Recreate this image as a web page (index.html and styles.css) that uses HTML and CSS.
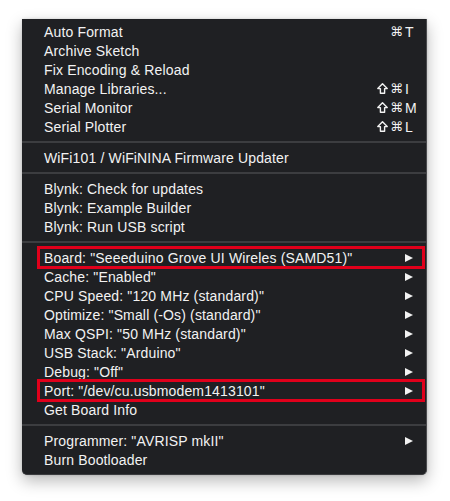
FILE: index.html
```html
<!DOCTYPE html>
<html>
<head>
<meta charset="utf-8">
<link rel="stylesheet" href="styles.css">
</head>
<body>
<div class="menu">
  <div class="item"><span class="label">Auto Format</span><span class="key"><span class="mods">⌘</span><span class="k">T</span></span></div>
  <div class="item"><span class="label">Archive Sketch</span></div>
  <div class="item"><span class="label">Fix Encoding &amp; Reload</span></div>
  <div class="item"><span class="label">Manage Libraries...</span><span class="key"><svg class="shift" viewBox="0 0 11 11"><path d="M5.5 0.8 L10.2 5.6 H7.6 V10.2 H3.4 V5.6 H0.8 Z"/></svg><span class="mods">⌘</span><span class="k">I</span></span></div>
  <div class="item"><span class="label">Serial Monitor</span><span class="key"><svg class="shift" viewBox="0 0 11 11"><path d="M5.5 0.8 L10.2 5.6 H7.6 V10.2 H3.4 V5.6 H0.8 Z"/></svg><span class="mods">⌘</span><span class="k">M</span></span></div>
  <div class="item"><span class="label">Serial Plotter</span><span class="key"><svg class="shift" viewBox="0 0 11 11"><path d="M5.5 0.8 L10.2 5.6 H7.6 V10.2 H3.4 V5.6 H0.8 Z"/></svg><span class="mods">⌘</span><span class="k">L</span></span></div>
  <div class="sep"></div>
  <div class="item"><span class="label">WiFi101 / WiFiNINA Firmware Updater</span></div>
  <div class="sep"></div>
  <div class="item"><span class="label">Blynk: Check for updates</span></div>
  <div class="item"><span class="label">Blynk: Example Builder</span></div>
  <div class="item"><span class="label">Blynk: Run USB script</span></div>
  <div class="sep"></div>
  <div class="item marked"><span class="label">Board: "Seeeduino Grove UI Wireles (SAMD51)"</span><span class="arrow"></span></div>
  <div class="item"><span class="label">Cache: "Enabled"</span><span class="arrow"></span></div>
  <div class="item"><span class="label">CPU Speed: "120 MHz (standard)"</span><span class="arrow"></span></div>
  <div class="item"><span class="label">Optimize: "Small (-Os) (standard)"</span><span class="arrow"></span></div>
  <div class="item"><span class="label">Max QSPI: "50 MHz (standard)"</span><span class="arrow"></span></div>
  <div class="item"><span class="label">USB Stack: "Arduino"</span><span class="arrow"></span></div>
  <div class="item"><span class="label">Debug: "Off"</span><span class="arrow"></span></div>
  <div class="item marked"><span class="label">Port: "/dev/cu.usbmodem1413101"</span><span class="arrow"></span></div>
  <div class="item"><span class="label">Get Board Info</span></div>
  <div class="sep"></div>
  <div class="item"><span class="label">Programmer: "AVRISP mkII"</span><span class="arrow"></span></div>
  <div class="item"><span class="label">Burn Bootloader</span></div>
</div>
</body>
</html>
```
FILE: styles.css
```css
html, body {
  margin: 0;
  padding: 0;
  background: #ffffff;
}
body {
  width: 450px;
  height: 501px;
  overflow: hidden;
}
.menu {
  margin: 19px 0 0 22px;
  width: 404px;
  padding: 3px 0 5px;
  background: #1f2023;
  border-right: 1px solid #4a4b4e;
  border-bottom: 1px solid #3a3b3e;
  border-radius: 0 0 5px 5px;
  box-shadow: 0 6px 16px rgba(0, 0, 0, 0.28), 0 0 3px rgba(0, 0, 0, 0.15);
  font-family: "Liberation Sans", Arial, "DejaVu Sans", sans-serif;
  font-size: 14px;
  letter-spacing: 0.15px;
  color: #f2f2f2;
}
.item {
  position: relative;
  height: 19px;
  display: flex;
  align-items: center;
  justify-content: space-between;
  padding: 0 7px 0 22px;
}
.label {
  white-space: nowrap;
}
.key {
  display: flex;
  align-items: center;
}
.shift {
  width: 11px;
  height: 11px;
  margin-right: 2px;
  fill: none;
  stroke: #f2f2f2;
  stroke-width: 1.4;
  stroke-linejoin: round;
}
.mods {
  font-family: "DejaVu Sans", sans-serif;
  font-size: 13px;
  letter-spacing: 0;
  margin-right: 2px;
}
.k {
  width: 14px;
  text-align: left;
}
.arrow {
  width: 0;
  height: 0;
  margin-right: 6px;
  border-top: 4.5px solid transparent;
  border-bottom: 4.5px solid transparent;
  border-left: 8px solid #f2f2f2;
}
.sep {
  height: 12px;
  display: flex;
  align-items: center;
}
.sep::before {
  content: "";
  display: block;
  width: 100%;
  height: 2px;
  background: #3c3d40;
}
.marked::after {
  content: "";
  position: absolute;
  left: 15px;
  right: 1px;
  top: -2px;
  bottom: -2px;
  border: 3px solid #e0001b;
}
```
